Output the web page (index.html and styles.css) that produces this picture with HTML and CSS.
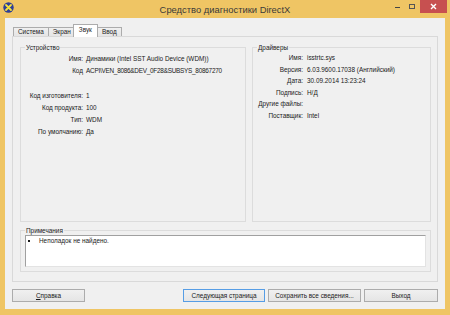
FILE: index.html
```html
<!DOCTYPE html>
<html lang="ru">
<head>
  <meta charset="UTF-8">
  <title>Средство диагностики DirectX</title>
  <link rel="stylesheet" href="styles.css">
</head>
<body>
  <div class="window">
    <div class="titlebar">
      <div class="app-icon">
        <svg width="11" height="11" viewBox="0 0 11 11">
          <circle cx="5.5" cy="5.5" r="5.2" fill="#2f3f96"/>
          <path d="M3 3 L8 8 M8 3 L3 8" stroke="#f4e23c" stroke-width="1.8" stroke-linecap="round"/>
        </svg>
      </div>
      <div class="title">Средство диагностики DirectX</div>
      <div class="controls">
        <span class="ctl-min"></span>
        <span class="ctl-max"></span>
        <span class="ctl-close">
          <svg width="7" height="7" viewBox="0 0 7 7">
            <path d="M1 1 L6 6 M6 1 L1 6" stroke="#fff" stroke-width="1.4"/>
          </svg>
        </span>
      </div>
    </div>

    <div class="client">
      <!-- вкладки -->
      <div class="tabs">
        <div class="tab">Система</div>
        <div class="tab">Экран</div>
        <div class="tab active">Звук</div>
        <div class="tab">Ввод</div>
      </div>

      <div class="panel">
        <div class="groups">
          <fieldset class="group device">
            <legend>Устройство</legend>
            <div class="rows">
              <span class="lbl">Имя:</span><span>Динамики (Intel SST Audio Device (WDM))</span>
              <span class="lbl">Код</span><span class="code">ACPI\VEN_8086&amp;DEV_0F28&amp;SUBSYS_80867270</span>
              <span class="gap"></span>
              <span class="lbl">Код изготовителя:</span><span>1</span>
              <span class="lbl">Код продукта:</span><span>100</span>
              <span class="lbl">Тип:</span><span>WDM</span>
              <span class="lbl">По умолчанию:</span><span>Да</span>
            </div>
          </fieldset>

          <fieldset class="group drivers">
            <legend>Драйверы</legend>
            <div class="rows">
              <span class="lbl">Имя:</span><span>isstrtc.sys</span>
              <span class="lbl">Версия:</span><span>6.03.9600.17038 (Английский)</span>
              <span class="lbl">Дата:</span><span>30.09.2014 13:23:24</span>
              <span class="lbl">Подпись:</span><span>Н/Д</span>
              <span class="lbl">Другие файлы:</span><span></span>
              <span class="lbl">Поставщик:</span><span>Intel</span>
            </div>
          </fieldset>
        </div>

        <fieldset class="group notes">
          <legend>Примечания</legend>
          <div class="notes-box">
            <ul>
              <li>Неполадок не найдено.</li>
            </ul>
          </div>
        </fieldset>
      </div>

      <div class="buttons">
        <button class="btn btn-help"><u>С</u>правка</button>
        <button class="btn btn-next default">Следующая страница</button>
        <button class="btn btn-save">Сохранить все сведения...</button>
        <button class="btn btn-exit">Выход</button>
      </div>
    </div>
  </div>
</body>
</html>
```

FILE: styles.css
```css
body {
  margin: 0;
  font-family: "Liberation Sans", Arial, sans-serif;
  font-size: 6.4px;
  color: #1a1a1a;
  background: #fff;
}
.window {
  width: 450px;
  height: 315px;
  background: #efc564;
  display: flex;
  flex-direction: column;
  box-sizing: border-box;
  padding-bottom: 6px;
}
.titlebar {
  height: 18px;
  display: grid;
  grid-template-columns: 1fr auto 1fr;
  align-items: start;
}
.app-icon {
  padding: 2px 0 0 3px;
  height: 11px;
}
.title {
  font-size: 9.4px;
  line-height: 19px;
  color: #3a3a3a;
}
.controls {
  justify-self: end;
  display: flex;
  align-items: flex-start;
  margin-right: 3px;
}
.ctl-min {
  width: 5px;
  height: 1px;
  background: #444;
  margin: 7px 9px 0 0;
}
.ctl-max {
  width: 4px;
  height: 3px;
  border: 1px solid #555;
  margin: 4px 5px 0 0;
}
.ctl-close {
  width: 27px;
  height: 13px;
  background: #c75050;
  display: flex;
  align-items: center;
  justify-content: center;
}
.client {
  flex: 1;
  margin: 0 5px;
  background: #f0f0f0;
  padding: 6px 7px 7px 7px;
  display: flex;
  flex-direction: column;
}
.tabs {
  display: flex;
  align-items: flex-end;
  padding-left: 1px;
  height: 12px;
  position: relative;
  z-index: 1;
}
.tab {
  height: 8px;
  line-height: 8px;
  padding: 0 4px;
  border: 1px solid #acacac;
  border-bottom: none;
  margin-right: -1px;
  background: linear-gradient(#f0f0f0, #e5e5e5);
  color: #222;
}
.tab.active {
  height: 12px;
  line-height: 10px;
  margin: 0 -1px -1px -2px;
  padding: 0 5px;
  background: #fff;
  position: relative;
}
.panel {
  flex: 1;
  border: 1px solid #d9d9d9;
  background: #f0f0f0;
  padding: 6px 6px 9px 7px;
  display: flex;
  flex-direction: column;
}
.groups {
  flex: 1;
  display: grid;
  grid-template-columns: 226px 1fr;
  gap: 6px;
}
.group {
  margin: 0;
  padding: 0;
  border: 1px solid #dcdcdc;
  min-width: 0;
}
.group legend {
  margin-left: 4px;
  padding: 0 1px;
  line-height: 9px;
}
.rows {
  display: grid;
  align-items: center;
}
.device .rows {
  grid-template-columns: 62px 1fr;
  column-gap: 3px;
  grid-auto-rows: 12.3px;
}
.drivers .rows {
  grid-template-columns: 50px 1fr;
  column-gap: 4px;
  grid-auto-rows: 11.5px;
}
.lbl {
  text-align: right;
  white-space: nowrap;
}
.code {
  letter-spacing: -0.25px;
}
.gap {
  grid-column: 1 / 3;
  height: 6px;
}
.notes {
  margin-top: 4px;
  height: 46px;
  box-sizing: border-box;
  display: flex;
}
.notes-box {
  flex: 1;
  margin: 0 4px 4px 4px;
  background: #fff;
  border-top: 1px solid #a0a0a0;
  border-left: 1px solid #a0a0a0;
  border-right: 1px solid #e3e3e3;
  border-bottom: 1px solid #e3e3e3;
  height: 32px;
  box-sizing: border-box;
}
.notes-box ul {
  margin: 0;
  padding: 1px 0 0 13px;
  list-style: square;
  line-height: 8px;
}
.buttons {
  display: flex;
  gap: 3px;
  margin-top: 7px;
}
.btn {
  height: 13px;
  padding: 0;
  font-family: inherit;
  font-size: 6.4px;
  color: #1a1a1a;
  border: 1px solid #acacac;
  background: linear-gradient(#f0f0f0, #e5e5e5);
}
.btn-help { width: 73px; margin-right: auto; }
.btn-next { width: 82px; }
.btn-save { width: 93px; }
.btn-exit { width: 74px; }
.btn.default {
  border-color: #569de5;
}
```
